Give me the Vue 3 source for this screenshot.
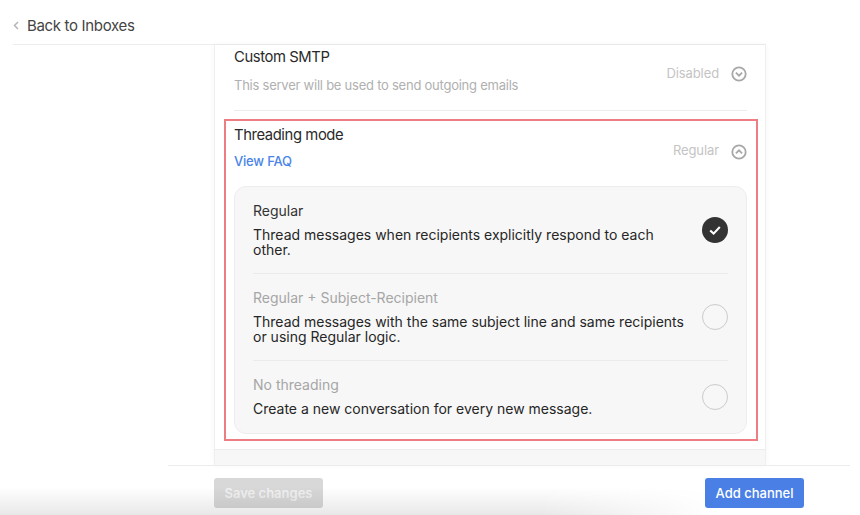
<template>
  <div class="page">
    <header class="topbar">
      <svg class="back-icon" width="6" height="9" viewBox="0 0 6 9">
        <path d="M5 1 L1.5 4.5 L5 8" fill="none" stroke="#b5b5b5" stroke-width="1.5" />
      </svg>
      <span>Back to Inboxes</span>
    </header>

    <main class="card">
      <section class="smtp">
        <div>
          <h3 class="title">Custom SMTP</h3>
          <p class="muted-line">This server will be used to send outgoing emails</p>
        </div>
        <div class="status">
          <span>Disabled</span>
          <svg width="16" height="16" viewBox="0 0 16 16" class="chevron">
            <circle cx="8" cy="8" r="6.7" />
            <path d="M4.9 6.7 L8 9.7 L11.1 6.7" />
          </svg>
        </div>
      </section>

      <section class="threading">
        <div class="threading-head">
          <div>
            <h3 class="title">Threading mode</h3>
            <a class="faq">View FAQ</a>
          </div>
          <div class="status">
            <span>Regular</span>
            <svg width="16" height="16" viewBox="0 0 16 16" class="chevron">
              <circle cx="8" cy="8" r="6.7" />
              <path d="M4.9 9.3 L8 6.3 L11.1 9.3" />
            </svg>
          </div>
        </div>

        <div class="options">
          <div v-for="opt in options" :key="opt.name" class="option" :class="opt.cls">
            <div class="option-text">
              <div class="option-name" :class="{ off: !opt.selected }">{{ opt.name }}</div>
              <div class="option-desc">{{ opt.desc }}</div>
            </div>
            <svg v-if="opt.selected" width="26" height="26" viewBox="0 0 26 26" class="radio">
              <circle cx="13" cy="13" r="13" fill="#333333" />
              <path d="M8.2 13.4 L11.6 16.6 L17.8 10" fill="none" stroke="#fff" stroke-width="2.1" />
            </svg>
            <span v-else class="radio-empty"></span>
          </div>
        </div>
      </section>

      <div class="card-end"></div>
    </main>

    <footer class="footer">
      <button class="btn save" disabled>Save changes</button>
      <button class="btn add">Add channel</button>
    </footer>
  </div>
</template>

<script setup>
const options = [
  {
    name: 'Regular',
    desc: 'Thread messages when recipients explicitly respond to each other.',
    selected: true,
    cls: 'first'
  },
  {
    name: 'Regular + Subject-Recipient',
    desc: 'Thread messages with the same subject line and same recipients or using Regular logic.',
    selected: false,
    cls: 'second'
  },
  {
    name: 'No threading',
    desc: 'Create a new conversation for every new message.',
    selected: false,
    cls: 'third'
  }
]
</script>

<style>
html, body {
  margin: 0;
  background: #fff;
}
</style>

<style scoped>
.page {
  width: 860px;
  height: 515px;
  overflow: hidden;
  position: relative;
  background: #fff;
  font-family: Inter, "Liberation Sans", sans-serif;
  color: #2c2c2c;
}

.page::after {
  content: "";
  position: absolute;
  left: 0;
  bottom: 0;
  width: 720px;
  height: 28px;
  background: linear-gradient(to bottom, rgba(0, 0, 0, 0), rgba(0, 0, 0, 0.09));
  -webkit-mask-image: linear-gradient(to right, #000 75%, transparent);
  mask-image: linear-gradient(to right, #000 75%, transparent);
  pointer-events: none;
}

.topbar {
  height: 45px;
  box-sizing: border-box;
  margin: 0 94px 0 13px;
  display: flex;
  align-items: center;
  gap: 8px;
  font-size: 15px;
  letter-spacing: -0.33px;
  color: #444;
  padding-top: 7px;
  border-bottom: 1px solid #ececec;
}

.back-icon {
  flex: none;
}

.card {
  width: 552px;
  height: 420px;
  box-sizing: border-box;
  margin-left: 214px;
  padding: 0 18px 0 19px;
  display: flex;
  flex-direction: column;
  border-left: 1px solid #efefef;
  border-right: 1px solid #efefef;
  box-shadow: 0 0 6px rgba(0, 0, 0, 0.04);
}

.smtp {
  height: 66px;
  display: flex;
  justify-content: space-between;
  align-items: flex-start;
  border-bottom: 1px solid #ececec;
  flex: none;
  padding-top: 3px;
  box-sizing: border-box;
}

.title {
  margin: 0;
  font-size: 14.8px;
  font-weight: 400;
  line-height: 18px;
  letter-spacing: -0.4px;
  color: #2a2a2a;
}

.muted-line {
  margin: 10px 0 0;
  font-size: 13px;
  line-height: 18px;
  letter-spacing: -0.24px;
  color: #b0b0b0;
}

.status {
  display: flex;
  align-items: center;
  gap: 12px;
  font-size: 13px;
  letter-spacing: -0.1px;
  color: #c4c4c4;
  margin-top: 18px;
}

.status span {
  margin-top: -2px;
}

.chevron {
  fill: none;
  stroke: #a8a8a8;
  stroke-width: 1.8;
}

.threading {
  margin: 8px -11px 0 -10px;
  border: 2px solid #ee7d83;
  padding: 5px 9px 6px 8px;
  height: 322px;
  box-sizing: border-box;
  flex: none;
}

.threading-head {
  display: flex;
  justify-content: space-between;
  align-items: flex-start;
  height: 60px;
}

.threading-head .status span {
  margin-top: -4px;
}

.faq {
  display: block;
  margin-top: 8px;
  font-size: 13px;
  line-height: 18px;
  letter-spacing: -0.2px;
  color: #4a84e8;
  font-weight: 500;
}

.options {
  height: 248px;
  box-sizing: border-box;
  background: #f7f7f7;
  border: 1px solid #ededed;
  border-radius: 12px;
  padding: 0 18px;
}

.option {
  display: flex;
  justify-content: space-between;
  align-items: center;
  box-sizing: border-box;
  border-bottom: 1px solid #ebebeb;
}

.option:last-child {
  border-bottom: 0;
}

.option.first { height: 87px; }
.option.second { height: 87px; }
.option.third { height: 72px; }

.option-text {
  width: 440px;
  padding-bottom: 2px;
}

.option-name {
  font-size: 14px;
  line-height: 18px;
  color: #333;
  margin-bottom: 7px;
}

.option-name.off {
  color: #a6a6a6;
}

.option-desc {
  font-size: 14px;
  line-height: 15px;
  color: #262626;
}

.radio {
  flex: none;
}

.radio-empty {
  flex: none;
  width: 26px;
  height: 26px;
  box-sizing: border-box;
  border: 1px solid #cbcbcb;
  border-radius: 50%;
}

.card-end {
  flex: 1;
  margin: 8px -18px 0 -19px;
  background: #f7f7f7;
  border-top: 1px solid #ececec;
}

.footer {
  margin-left: 168px;
  margin-right: 10px;
  height: 50px;
  box-sizing: border-box;
  border-top: 1px solid #ececec;
  padding: 12px 46px 0 46px;
  display: flex;
  justify-content: space-between;
  align-items: flex-start;
}

.btn {
  height: 30px;
  border: 0;
  border-radius: 3px;
  font-family: inherit;
  font-size: 13px;
  font-weight: 600;
  color: #fff;
}

.save {
  width: 109px;
  background: #d8d8d8;
  color: #f1f1f1;
}

.add {
  width: 99px;
  background: #4a80e6;
  font-weight: 500;
}
</style>
